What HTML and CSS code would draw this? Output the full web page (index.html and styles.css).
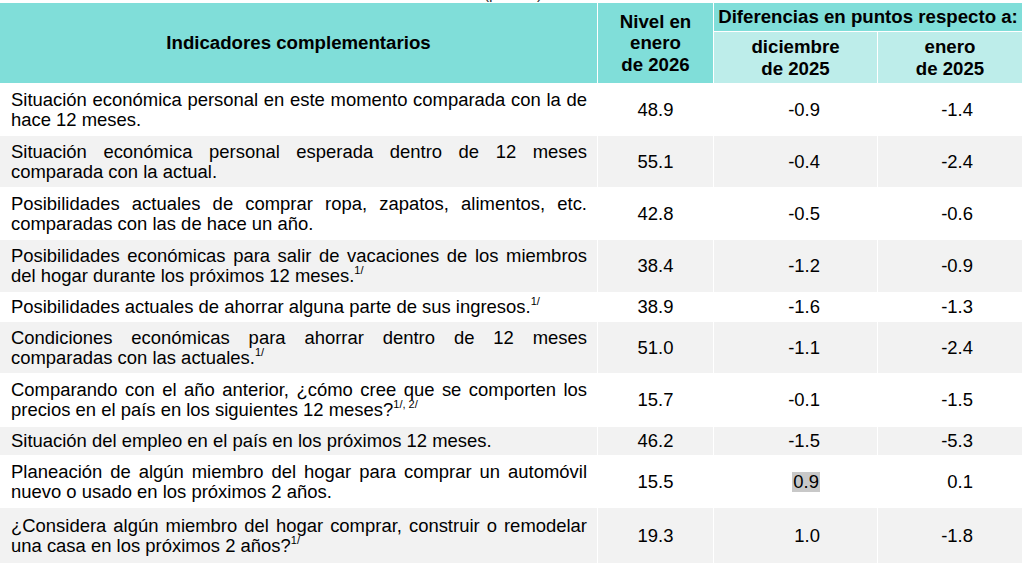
FILE: index.html
```html
<!DOCTYPE html>
<html lang="es">
<head>
<meta charset="utf-8">
<title>Indicadores complementarios</title>
<link rel="stylesheet" href="styles.css">
</head>
<body>
<div class="caption"><span class="caption-text">(puntos)</span></div>
<div class="tbl">
  <div class="h h-ind">Indicadores complementarios</div>
  <div class="h h-niv">Nivel en<br>enero<br>de 2026</div>
  <div class="h h-dif">Diferencias en puntos respecto a:</div>
  <div class="h2">diciembre<br>de 2025</div>
  <div class="h2">enero<br>de 2025</div>

  <div class="c lbl"><p>Situación económica personal en este momento comparada con la de hace 12 meses.</p></div>
  <div class="c n2">48.9</div><div class="c n3">-0.9</div><div class="c n4">-1.4</div>

  <div class="c lbl alt"><p>Situación económica personal esperada dentro de 12 meses comparada con la actual.</p></div>
  <div class="c n2 alt">55.1</div><div class="c n3 alt">-0.4</div><div class="c n4 alt">-2.4</div>

  <div class="c lbl"><p>Posibilidades actuales de comprar ropa, zapatos, alimentos, etc. comparadas con las de hace un año.</p></div>
  <div class="c n2">42.8</div><div class="c n3">-0.5</div><div class="c n4">-0.6</div>

  <div class="c lbl alt"><p>Posibilidades económicas para salir de vacaciones de los miembros del hogar durante los próximos 12 meses.<sup>1/</sup></p></div>
  <div class="c n2 alt">38.4</div><div class="c n3 alt">-1.2</div><div class="c n4 alt">-0.9</div>

  <div class="c lbl"><p>Posibilidades actuales de ahorrar alguna parte de sus ingresos.<sup>1/</sup></p></div>
  <div class="c n2">38.9</div><div class="c n3">-1.6</div><div class="c n4">-1.3</div>

  <div class="c lbl alt"><p>Condiciones económicas para ahorrar dentro de 12 meses comparadas con las actuales.<sup>1/</sup></p></div>
  <div class="c n2 alt">51.0</div><div class="c n3 alt">-1.1</div><div class="c n4 alt">-2.4</div>

  <div class="c lbl"><p>Comparando con el año anterior, ¿cómo cree que se comporten los precios en el país en los siguientes 12 meses?<sup>1/, 2/</sup></p></div>
  <div class="c n2">15.7</div><div class="c n3">-0.1</div><div class="c n4">-1.5</div>

  <div class="c lbl alt"><p>Situación del empleo en el país en los próximos 12 meses.</p></div>
  <div class="c n2 alt">46.2</div><div class="c n3 alt">-1.5</div><div class="c n4 alt">-5.3</div>

  <div class="c lbl"><p>Planeación de algún miembro del hogar para comprar un automóvil nuevo o usado en los próximos 2 años.</p></div>
  <div class="c n2">15.5</div><div class="c n3"><span class="hl">0.9</span></div><div class="c n4">0.1</div>

  <div class="c lbl alt"><p>¿Considera algún miembro del hogar comprar, construir o remodelar una casa en los próximos 2 años?<sup>1/</sup></p></div>
  <div class="c n2 alt">19.3</div><div class="c n3 alt">1.0</div><div class="c n4 alt">-1.8</div>
</div>
</body>
</html>
```

FILE: styles.css
```css
html, body {
  margin: 0;
  padding: 0;
  background: #ffffff;
}
body {
  font-family: "Liberation Sans", Arial, sans-serif;
  font-size: 18.67px;
  color: #000000;
  overflow: hidden;
}
.caption {
  height: 3px;
  overflow: hidden;
  text-align: center;
  width: 1024px;
}
.caption-text {
  display: block;
  font-size: 16px;
  line-height: 20px;
  margin-top: -16px;
  padding-left: 2px;
  color: #333;
}
.tbl {
  display: grid;
  width: 1022px;
  grid-template-columns: 597px 115px 163px 144px;
  grid-template-rows: 28px 51px 51px 51px 51px 52px 28px 51px 52px 28px 51px 55px;
  gap: 1px;
  background: #ffffff;
}
.h {
  background: #80ded9;
  font-weight: bold;
  display: flex;
  align-items: center;
  justify-content: center;
  text-align: center;
  line-height: 21.5px;
}
.h-ind { grid-row: 1 / 3; }
.h-niv { grid-row: 1 / 3; }
.h-dif { grid-column: 3 / 5; white-space: nowrap; }
.h2 {
  background: #bdedea;
  font-weight: bold;
  display: flex;
  align-items: center;
  justify-content: center;
  text-align: center;
  line-height: 21.5px;
}
.c {
  display: flex;
  align-items: center;
  background: #ffffff;
  line-height: 20px;
  font-size: 18.45px;
}
.c.alt { background: #f2f2f2; }
.lbl {
  padding: 0 10px 0 11px;
}
.lbl p {
  margin: 0;
  width: 100%;
  text-align: justify;
  text-align-last: left;
}
.lbl sup {
  font-size: 11px;
  line-height: 0;
  vertical-align: 8px;
}
.n2 { justify-content: center; }
.n3 { justify-content: flex-end; padding-right: 57px; }
.n4 { justify-content: flex-end; padding-right: 49px; }
.hl {
  background: #c8c8c8;
  padding: 0 1px;
}
```
